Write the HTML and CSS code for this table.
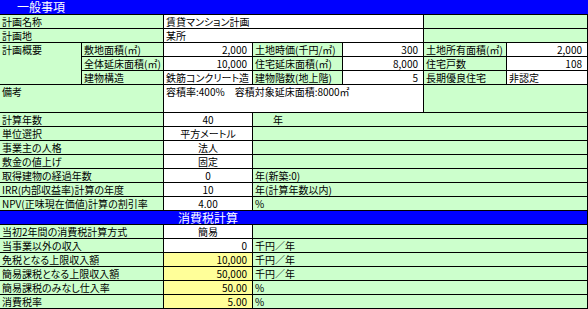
FILE: index.html
```html
<!DOCTYPE html>
<html lang="ja">
<head>
<meta charset="utf-8">
<title>一般事項</title>
<link rel="stylesheet" href="styles.css">
</head>
<body>
<div class="sheet">
  <div class="c title full">一般事項</div>

  <div class="c g s2">計画名称</div>
  <div class="c w s3">賃貸マンション計画</div>
  <div class="c g s2"></div>

  <div class="c g s2">計画地</div>
  <div class="c w s3">某所</div>
  <div class="c g s2"></div>

  <div class="c g r3">計画概要</div>
  <div class="c g">敷地面積(㎡)</div>
  <div class="c w num">2,000</div>
  <div class="c g">土地時価(千円/㎡)</div>
  <div class="c w num">300</div>
  <div class="c g">土地所有面積(㎡)</div>
  <div class="c w num">2,000</div>

  <div class="c g">全体延床面積(㎡)</div>
  <div class="c w num">10,000</div>
  <div class="c g">住宅延床面積(㎡)</div>
  <div class="c w num">8,000</div>
  <div class="c g">住宅戸数</div>
  <div class="c w num">108</div>

  <div class="c g">建物構造</div>
  <div class="c w">鉄筋コンクリート造</div>
  <div class="c g">建物階数(地上階)</div>
  <div class="c w num">5</div>
  <div class="c g">長期優良住宅</div>
  <div class="c w">非認定</div>

  <div class="c g s2 r2">備考</div>
  <div class="c w s3 r2">容積率:400%<span class="gap"></span>容積対象延床面積:8000㎡</div>
  <div class="c g s2 r2"></div>

  <div class="c g s2">計算年数</div>
  <div class="c w ctr">40</div>
  <div class="c g s4 unit-in">年</div>

  <div class="c g s2">単位選択</div>
  <div class="c w ctr">平方メートル</div>
  <div class="c g s4"></div>

  <div class="c g s2">事業主の人格</div>
  <div class="c w ctr">法人</div>
  <div class="c g s4"></div>

  <div class="c g s2">敷金の値上げ</div>
  <div class="c w ctr">固定</div>
  <div class="c g s4"></div>

  <div class="c g s2">取得建物の経過年数</div>
  <div class="c w ctr">0</div>
  <div class="c g s4">年(新築:0)</div>

  <div class="c g s2">IRR(内部収益率)計算の年度</div>
  <div class="c w ctr">10</div>
  <div class="c g s4">年(計算年数以内)</div>

  <div class="c g s2">NPV(正味現在価値)計算の割引率</div>
  <div class="c w ctr">4.00</div>
  <div class="c g s4">%</div>

  <div class="c title2 full">消費税計算</div>

  <div class="c g s2">当初2年間の消費税計算方式</div>
  <div class="c w ctr">簡易</div>
  <div class="c g s4"></div>

  <div class="c g s2">当事業以外の収入</div>
  <div class="c w num">0</div>
  <div class="c g s4">千円／年</div>

  <div class="c g s2">免税となる上限収入額</div>
  <div class="c y num">10,000</div>
  <div class="c g s4">千円／年</div>

  <div class="c g s2">簡易課税となる上限収入額</div>
  <div class="c y num">50,000</div>
  <div class="c g s4">千円／年</div>

  <div class="c g s2">簡易課税のみなし仕入率</div>
  <div class="c y num">50.00</div>
  <div class="c g s4">%</div>

  <div class="c g s2">消費税率</div>
  <div class="c y num">5.00</div>
  <div class="c g s4">%</div>
</div>
</body>
</html>
```
FILE: styles.css
```css
html, body {
  margin: 0;
  padding: 0;
  background: #ffffff;
}
.sheet {
  display: grid;
  grid-template-columns: 82px 82px 89px 90px 81px 83px 81px;
  grid-template-rows: 15px repeat(21, 14px);
  width: 588px;
  font-family: "Noto Sans CJK JP", "Noto Sans", sans-serif;
  font-size: 10px;
  font-feature-settings: "palt";
  color: #000;
}
.c {
  box-sizing: border-box;
  border-right: 1px solid #000;
  border-bottom: 1px solid #000;
  line-height: 13px;
  padding: 0 0 0 2px;
  white-space: nowrap;
  overflow: hidden;
}
.g { background: #ccffcc; }
.w { background: #ffffff; }
.y { background: #ffff99; }
.s2 { grid-column: span 2; }
.s3 { grid-column: span 3; }
.s4 { grid-column: span 4; }
.full { grid-column: 1 / -1; }
.r2 { grid-row: span 2; }
.r3 { grid-row: span 3; }
.num { text-align: right; padding: 0 5px 0 0; }
.ctr { text-align: center; padding: 0; }
.unit-in { padding-left: 20px; }
.gap { display: inline-block; width: 10px; }
.title {
  background: #0000ff;
  color: #ffffff;
  font-size: 12px;
  line-height: 14px;
  padding-left: 17px;
  border-right: none;
  overflow: visible;
}
.title2 {
  background: #0000ff;
  color: #ffffff;
  font-size: 12px;
  line-height: 13px;
  padding-left: 178px;
  overflow: visible;
}
```
